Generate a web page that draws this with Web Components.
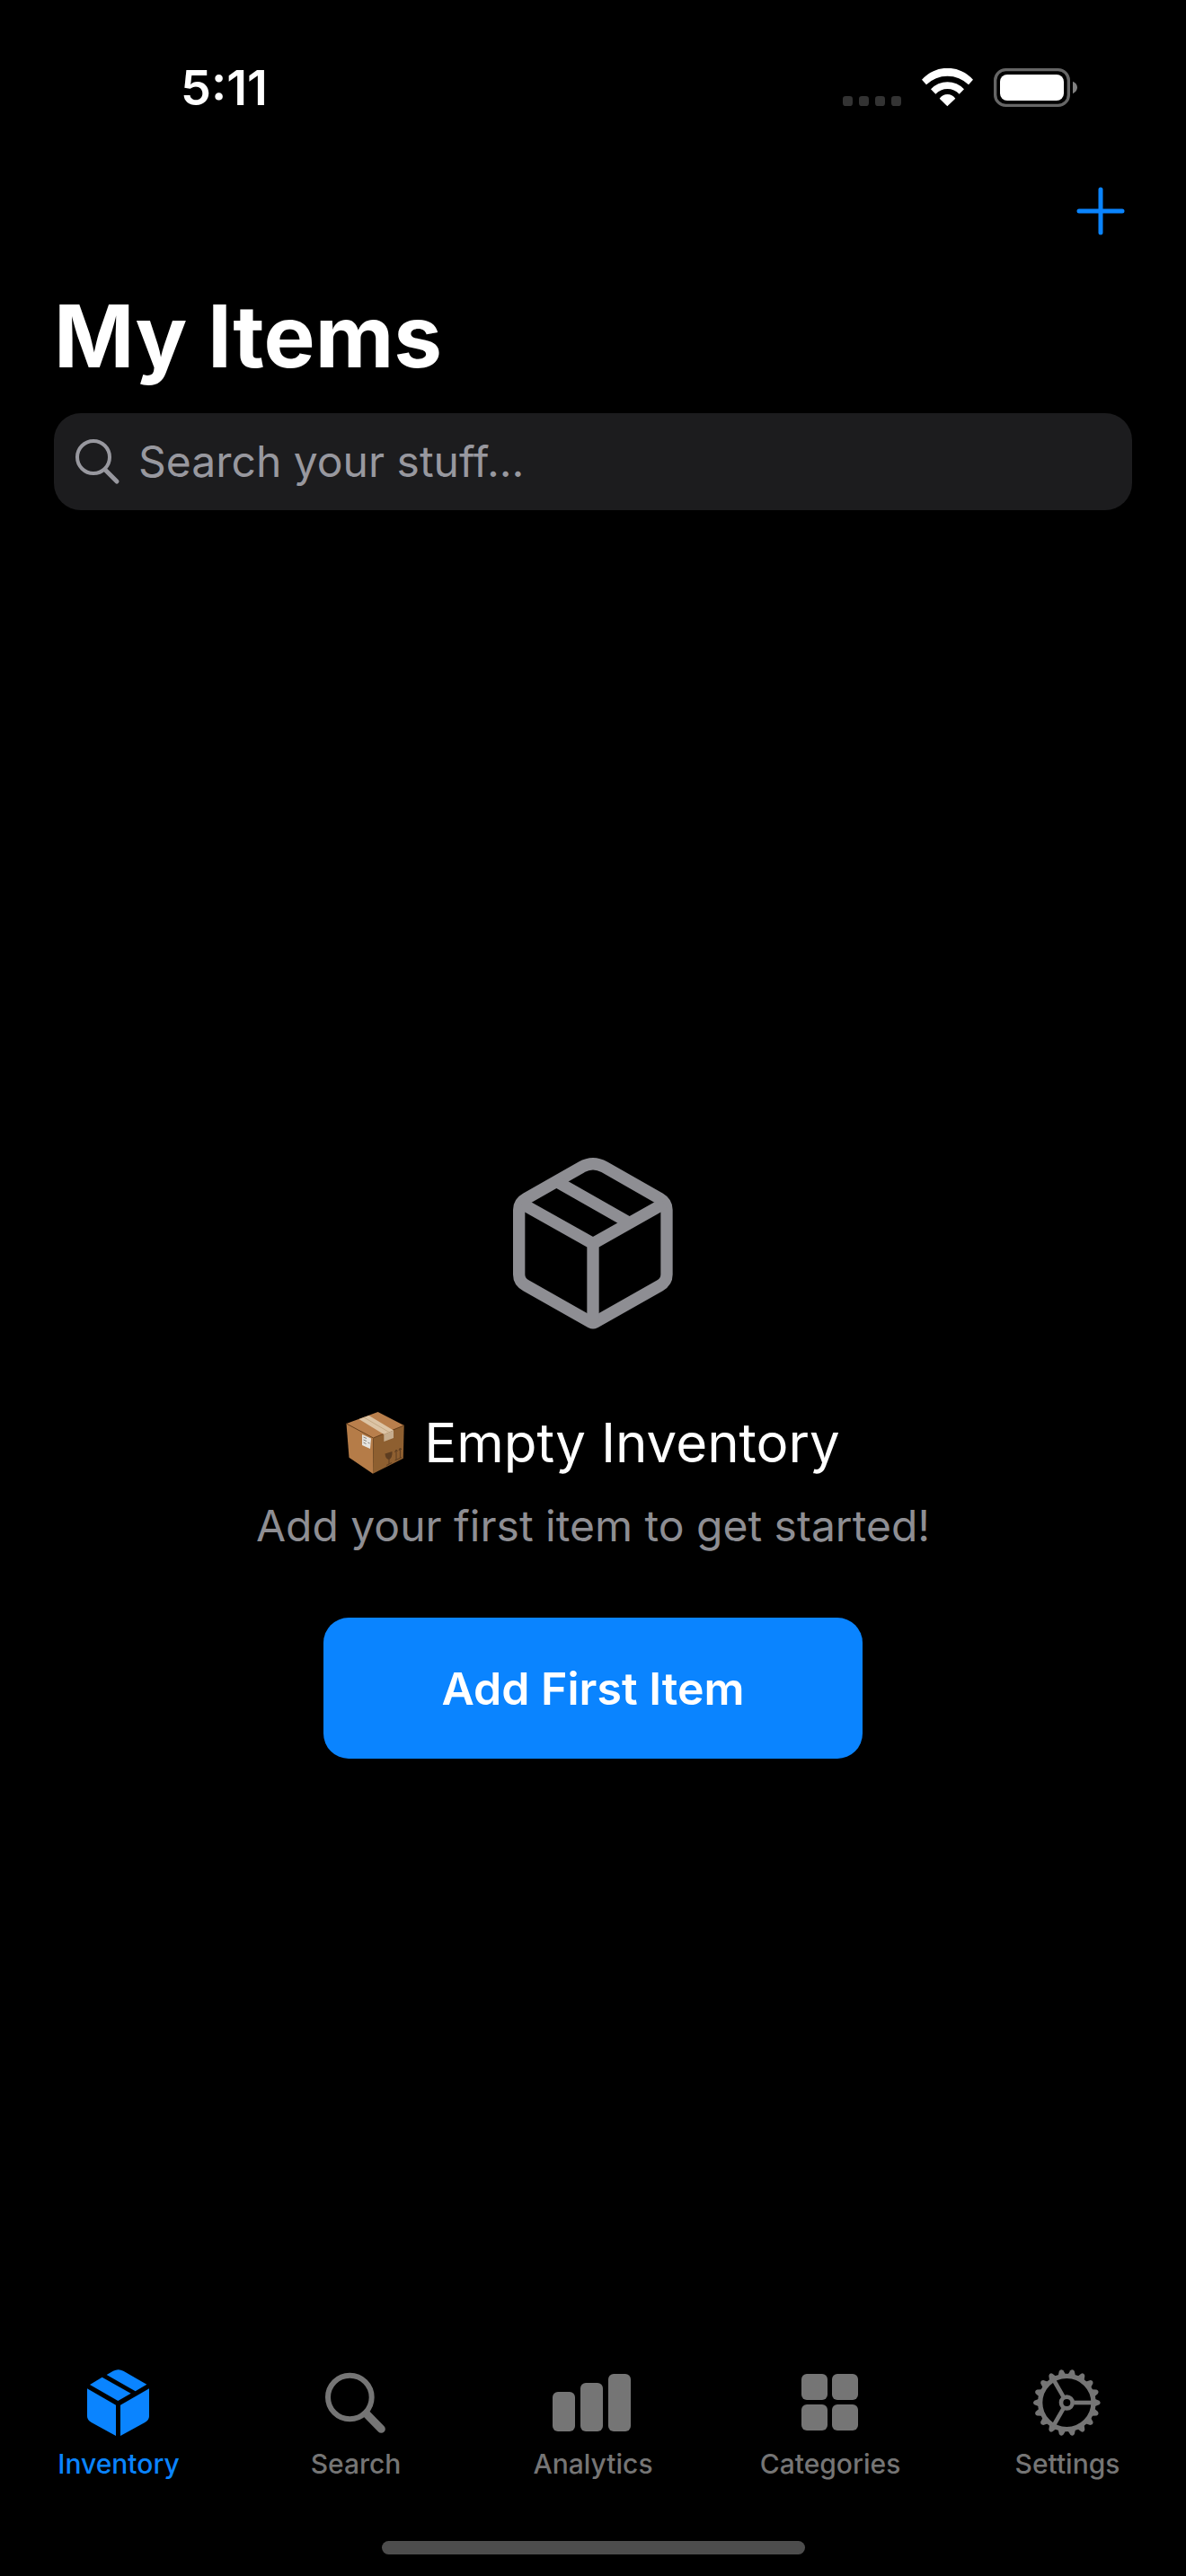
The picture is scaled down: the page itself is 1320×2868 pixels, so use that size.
<!DOCTYPE html>
<html lang="en">
<head>
<meta charset="utf-8">
<meta name="viewport" content="width=device-width">
<title>My Items</title>
<style>
  html { background: #000; }
  body {
    margin: 0;
    background: #000;
    color: #fff;
    font-family: Inter, "Liberation Sans", sans-serif;
    --accent: #0a84ff;
    --secondary: #8e8e93;
    --field: #1c1c1e;
    --field-text: #98989f;
    --tab: #757575;
  }
</style>
</head>
<body>
<inventory-app></inventory-app>

<script>
const define = (name, markup, setup) => {
  const template = document.createElement('template');
  template.innerHTML = markup;
  customElements.define(name, class extends HTMLElement {
    constructor() {
      super();
      this.attachShadow({ mode: 'open' }).append(template.content.cloneNode(true));
    }
    connectedCallback() {
      if (setup) setup(this, this.shadowRoot);
    }
  });
};

const gearTeeth = Array.from({ length: 18 }, (_, i) =>
  `<path d="M355 152L370 158Q378 165 370 172L355 178Z" transform="rotate(${i * 20} 262 165)"/>`).join('');
const gearSpokes = [0, 120, 240].map(a =>
  `<path d="M286 158H346V172H286Z" transform="rotate(${a} 262 165)"/>`).join('');

const tabIcons = {
  box: ['132 45 288 240', `
    <path d="M171 118L267 173V276L185 231Q171 223 171 210Z"/>
    <path d="M378 118L282 173V276L364 231Q378 223 378 210Z"/>
    <path d="M180 105L221 80L317 134L274 159Z"/>
    <path d="M236 72L258 59Q275 50 292 59L370 104L332 127Z"/>`],
  search: ['84 45 288 240', `
    <path d="M264 203L313 253" stroke="currentColor" stroke-width="27" stroke-linecap="round"/>
    <circle cx="208" cy="147" r="73" fill="#000" stroke="currentColor" stroke-width="18"/>`],
  chart: ['876 45 288 240', `
    <rect x="885" y="129" width="75" height="132" rx="18"/>
    <rect x="978" y="99" width="75" height="162" rx="18"/>
    <rect x="1071" y="69" width="75" height="192" rx="18"/>`],
  grid: ['168 45 288 240', `
    <rect x="216" y="69" width="87" height="87" rx="18"/>
    <rect x="318" y="69" width="87" height="87" rx="18"/>
    <rect x="216" y="171" width="87" height="87" rx="18"/>
    <rect x="318" y="171" width="87" height="87" rx="18"/>`],
  gear: ['120 45 288 240', `
    <circle cx="262" cy="165" r="89" fill="none" stroke="currentColor" stroke-width="16"/>
    <circle cx="262" cy="165" r="19" fill="none" stroke="currentColor" stroke-width="14"/>
    ${gearTeeth}${gearSpokes}`]
};

define('status-bar', `
  <style>
    :host { display: flex; align-items: center; justify-content: space-between; padding: 67px 121px 28px 201px; }
    time { font-size: 54px; line-height: 62px; font-weight: 600; }
    svg { display: block; width: 261px; height: 44px; }
  </style>
  <time>5:11</time>
  <svg viewBox="51 75 783 132" role="img" aria-label="No cellular signal, Wi-Fi on, battery full">
    <g fill="#333">
      <rect x="51" y="168" width="33" height="33" rx="10"/>
      <rect x="105" y="168" width="33" height="33" rx="10"/>
      <rect x="159" y="168" width="33" height="33" rx="10"/>
      <rect x="213" y="168" width="33" height="33" rx="10"/>
    </g>
    <g fill="#fff">
      <path d="M315 113A114 114 0 0 1 486 113L471 130A101 101 0 0 0 330 130Z"/>
      <path d="M345 145A75 75 0 0 1 456 145L440 161A55 55 0 0 0 361 161Z"/>
      <path d="M374 176A32 32 0 0 1 427 176L400 202Z"/>
    </g>
    <rect x="560" y="80" width="245" height="119" rx="35" fill="none" stroke="#666" stroke-width="10"/>
    <rect x="576" y="96" width="213" height="87" rx="24" fill="#fff"/>
    <path d="M819 119Q834 126 834 139T819 160Z" fill="#808080"/>
  </svg>`);

define('nav-bar', `
  <style>
    :host { display: flex; justify-content: flex-end; padding: 0 48px; }
    button { display: flex; align-items: center; justify-content: center; width: 94px; height: 156px; padding: 0; border: 0; background: none; color: var(--accent); }
    svg { width: 54px; height: 54px; }
  </style>
  <button type="button" aria-label="Add item">
    <svg viewBox="0 0 54 54" stroke="currentColor" stroke-width="5" stroke-linecap="round"><path d="M3 27H51M27 3V51"/></svg>
  </button>`);

define('large-title', `
  <style>
    :host { display: block; padding: 0 60px; }
    h1 { margin: 0; font-size: 96px; line-height: 122px; font-weight: 700; }
  </style>
  <h1><slot></slot></h1>`);

define('search-field', `
  <style>
    :host { display: block; padding: 25px 60px 0; }
    label { display: flex; align-items: center; gap: 20px; height: 108px; box-sizing: border-box; padding: 0 22px; border-radius: 30px; background: var(--field); color: var(--field-text); }
    svg { flex: none; width: 52px; height: 52px; }
    input { flex: 1; min-width: 0; height: 60px; padding: 0; border: 0; outline: 0; background: none; color: #fff; font: 400 48px/60px Inter, "Liberation Sans", sans-serif; }
    input::placeholder { color: var(--field-text); opacity: 1; }
  </style>
  <label>
    <svg viewBox="0 0 52 52" fill="none" stroke="currentColor" stroke-linecap="round" aria-hidden="true">
      <circle cx="22" cy="21" r="18" stroke-width="4"/>
      <path d="M35 35L48 48" stroke-width="5"/>
    </svg>
    <input type="search" placeholder="Search your stuff..." aria-label="Search your stuff">
  </label>`);

define('package-emoji', `
  <style>
    :host { display: block; }
    svg { display: block; width: 65px; height: 69px; }
  </style>
  <svg viewBox="0 0 65 69" role="img" aria-label="Package">
    <path d="M.5 13L35.600 0L64.700 15L30.500 29.500Z" fill="#b97f4c"/>
    <path d="M.5 13L30.500 29L30 68.700L3.500 50.700Z" fill="#b57c48"/>
    <path d="M30.500 29L64.700 15L63.800 51.700L30 68.700Z" fill="#8e5f30"/>
    <path d="M.5 13L30.500 29L64.700 15" fill="none" stroke="#6b431f" stroke-width="1"/>
    <path d="M14.500 8L25.600 4L53 20.500L42.300 25Z" fill="#dcc4a5"/>
    <path d="M20 6L48 22.500" stroke="#c5a984" stroke-width="1"/>
    <path d="M42.300 25L53 20.500V29L42.300 33Z" fill="#c6ad8e"/>
    <path d="M18 25L28 29.500L27 41L18 37Z" fill="#e6e4df"/>
    <path d="M19.500 28L23 29.500M19.500 31L23 32.500M19.500 34L22.500 35.500M24.500 34L26.500 35" stroke="#85827c" stroke-width="1"/>
    <path d="M43.500 46.500L51.500 44Q52 51 48 53Q44 53 43.500 46.500Z" fill="#5d3d20"/>
    <path d="M48 52V58M45 59.500L51 56.500M56 53V43M54.500 45L56 42L57.500 44M60.400 51V41M59 43L60.400 40L62 42M54.500 54L62 50.500" fill="none" stroke="#5d3d20" stroke-width="1"/>
  </svg>`);

define('action-button', `
  <style>
    :host { display: block; }
    button { width: 600px; height: 157px; padding: 0; border: 0; border-radius: 28px; background: var(--accent); color: #fff; font: 600 50px/60px Inter, "Liberation Sans", sans-serif; }
  </style>
  <button type="button"><slot></slot></button>`);

define('empty-state', `
  <style>
    :host { display: flex; flex-direction: column; align-items: center; justify-content: center; padding-top: 43px; text-align: center; }
    .box { width: 178px; height: 192px; color: var(--secondary); }
    h2 { display: flex; align-items: center; gap: 22px; margin: 86px 0 23px; font-size: 60px; line-height: 80px; font-weight: 400; }
    p { margin: 0 0 72px; font-size: 48px; line-height: 60px; color: var(--secondary); }
  </style>
  <svg class="box" viewBox="93 85 534 576" fill="none" stroke="currentColor" stroke-width="40" aria-hidden="true">
    <path d="M322 119Q360 97 398 119L584 225Q606 238 606 262V478Q606 502 583 515L366 638Q360 641 354 638L137 515Q113 502 113 478V262Q113 238 136 225Z"/>
    <path d="M122 241L360 375L597 241M360 375V630M240 168L480 305"/>
  </svg>
  <h2><slot name="icon"></slot><slot name="title"></slot></h2>
  <p><slot name="message"></slot></p>
  <slot name="action"></slot>`);

define('tab-item', `
  <style>
    :host { display: block; flex: 1; color: var(--tab); }
    :host([active]) { color: var(--accent); }
    a { display: flex; flex-direction: column; align-items: center; gap: 10px; color: inherit; text-decoration: none; font-size: 30px; line-height: 36px; font-weight: 500; }
    svg { width: 96px; height: 80px; }
  </style>
  <a href="#"><svg aria-hidden="true" fill="currentColor"></svg><span><slot></slot></span></a>`,
  (host, root) => {
    const [box, shapes] = tabIcons[host.getAttribute('icon')];
    const svg = root.querySelector('svg');
    svg.setAttribute('viewBox', box);
    svg.innerHTML = shapes;
    if (host.hasAttribute('active')) root.querySelector('a').setAttribute('aria-current', 'page');
  });

define('tab-bar', `
  <style>
    :host { display: block; padding-bottom: 24px; }
    nav { display: flex; }
    .home { width: 471px; height: 15px; margin: 68px auto 0; border-radius: 8px; background: #4d4d4d; }
  </style>
  <nav aria-label="Sections"><slot></slot></nav>
  <div class="home"></div>`);

define('inventory-app', `
  <style>
    :host { display: flex; flex-direction: column; min-height: 100vh; }
    main { display: flex; flex: 1; flex-direction: column; }
    empty-state { flex: 1; }
  </style>
  <status-bar></status-bar>
  <nav-bar></nav-bar>
  <main>
    <large-title>My Items</large-title>
    <search-field></search-field>
    <empty-state>
      <package-emoji slot="icon"></package-emoji>
      <span slot="title">Empty Inventory</span>
      <span slot="message">Add your first item to get started!</span>
      <action-button slot="action">Add First Item</action-button>
    </empty-state>
  </main>
  <tab-bar>
    <tab-item icon="box" active>Inventory</tab-item>
    <tab-item icon="search">Search</tab-item>
    <tab-item icon="chart">Analytics</tab-item>
    <tab-item icon="grid">Categories</tab-item>
    <tab-item icon="gear">Settings</tab-item>
  </tab-bar>`);
</script>
</body>
</html>
